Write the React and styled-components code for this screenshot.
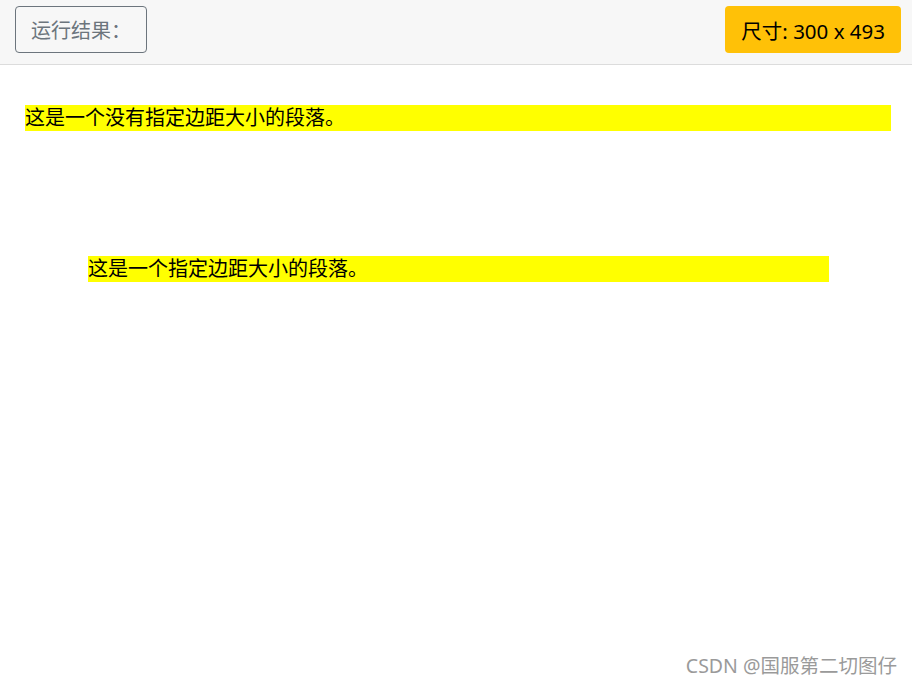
import React from 'react'
import styled, { createGlobalStyle } from 'styled-components'

const GlobalStyle = createGlobalStyle`
  html, body {
    margin: 0;
    padding: 0;
    background: #fff;
  }
  body {
    font-family: "Noto Sans", "Noto Sans CJK SC", sans-serif;
  }
  #root {
    min-height: 100vh;
  }
`

const Page = styled.div`
  position: relative;
  min-height: 100vh;
`

const Toolbar = styled.div`
  display: flex;
  align-items: flex-start;
  justify-content: space-between;
  height: 58px;
  padding: 6px 11px 0 15px;
  background: #f7f7f7;
  border-bottom: 1px solid #dcdcdc;
  box-sizing: content-box;
`

const OutlineButton = styled.div`
  display: flex;
  align-items: center;
  height: 47px;
  box-sizing: border-box;
  padding: 0 15px;
  border: 1px solid #6c757d;
  border-radius: 4px;
  color: #6c757d;
  font-size: 20px;
`

const SizeBadge = styled.div`
  display: flex;
  align-items: center;
  height: 47px;
  box-sizing: border-box;
  padding: 0 16px;
  background: #ffc107;
  border-radius: 4px;
  color: #000;
  font-size: 20.5px;
`

const Content = styled.div`
  padding: 40px 21px 0 25px;
`

const Para = styled.p`
  margin: ${(p) => (p.$spaced ? '125px 62px 0 63px' : '0')};
  background: #ff0;
  color: #000;
  font-size: 20px;
  line-height: 26px;
  height: 26px;
  white-space: nowrap;
`

const Watermark = styled.div`
  position: absolute;
  right: 15px;
  bottom: 8px;
  color: #9a9a9a;
  font-size: 19.5px;
`

export default function App() {
  return (
    <Page>
      <GlobalStyle />
      <Toolbar>
        <OutlineButton>运行结果：</OutlineButton>
        <SizeBadge>尺寸: 300 x 493</SizeBadge>
      </Toolbar>
      <Content>
        <Para>这是一个没有指定边距大小的段落。</Para>
        <Para $spaced>这是一个指定边距大小的段落。</Para>
      </Content>
      <Watermark>CSDN @国服第二切图仔</Watermark>
    </Page>
  )
}
